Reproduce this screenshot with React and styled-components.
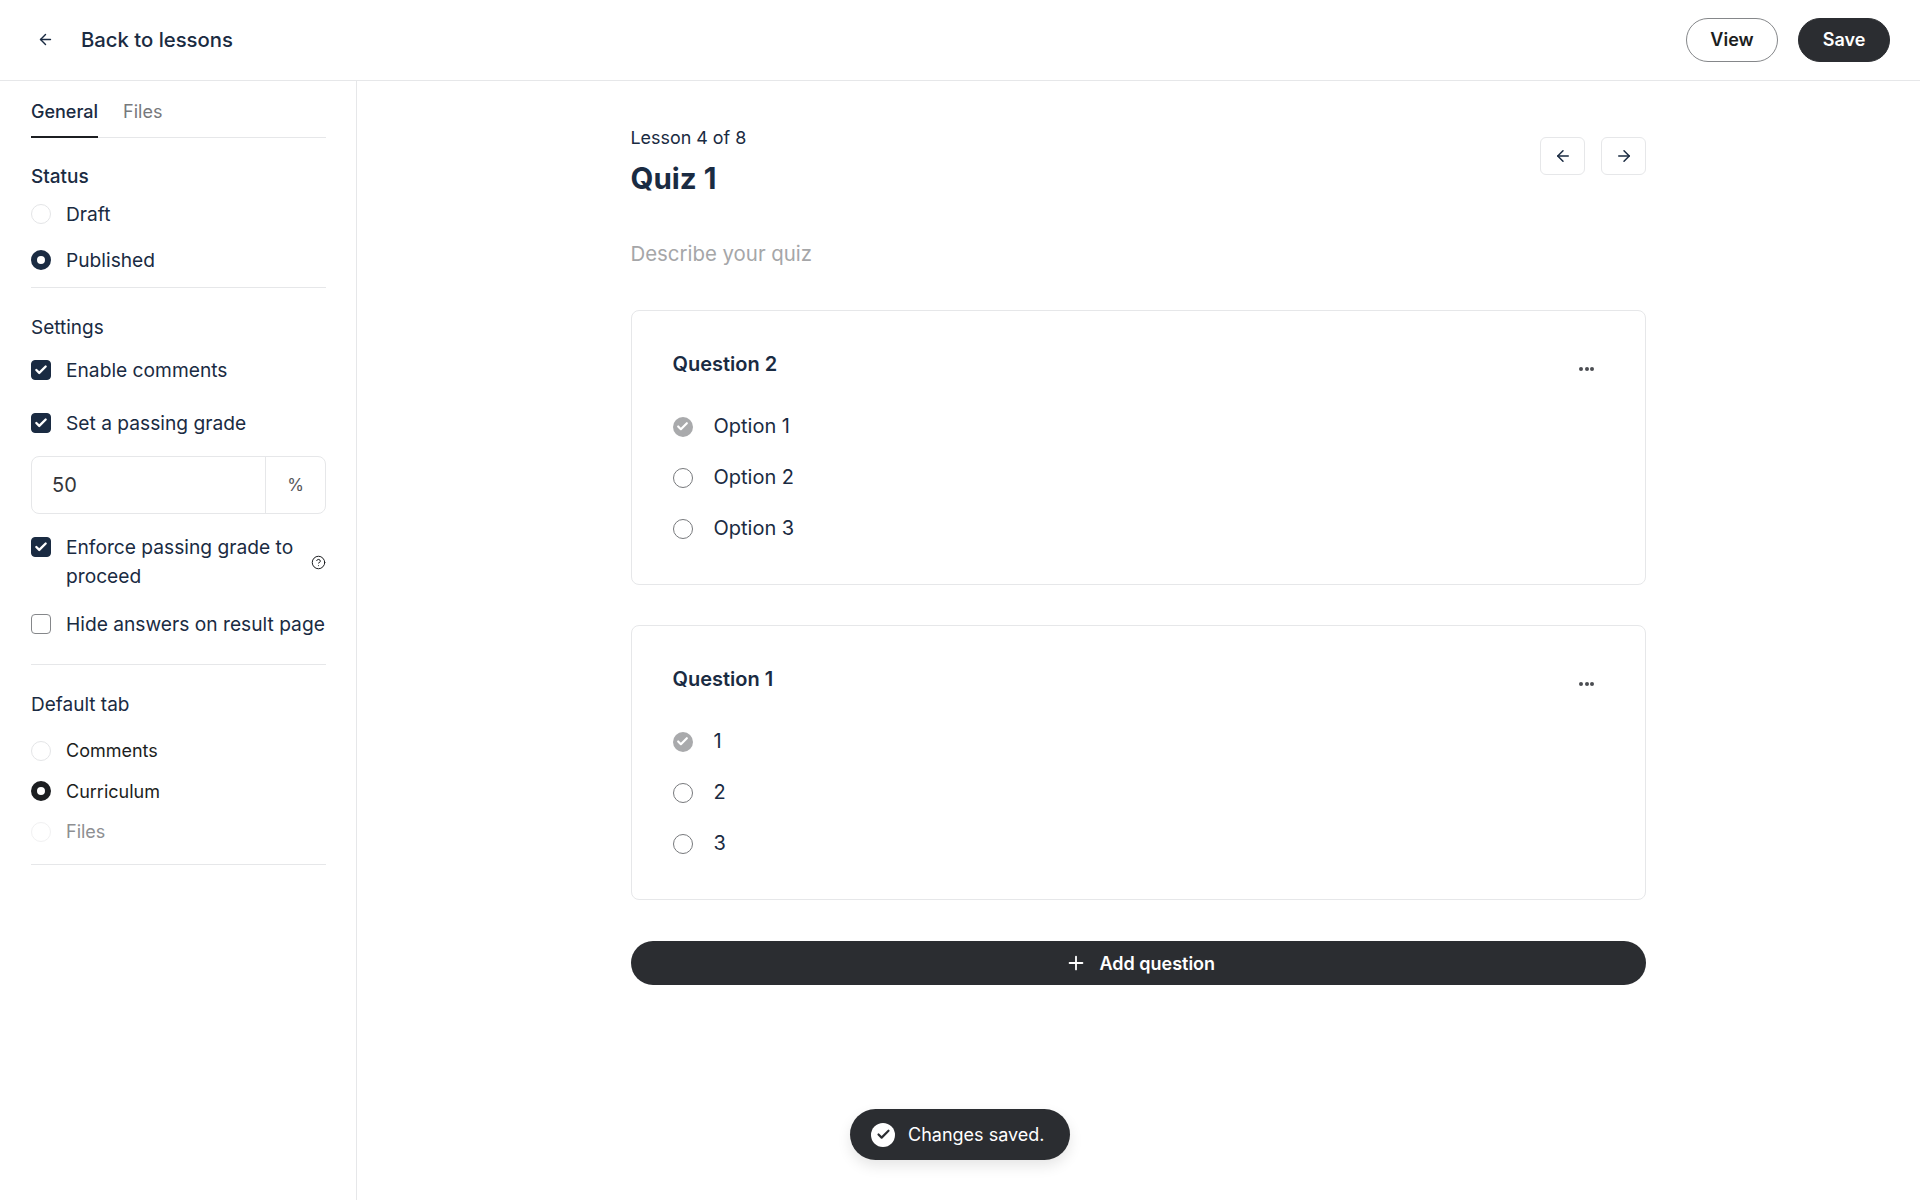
import React from 'react';
import styled, { createGlobalStyle } from 'styled-components';
import { ArrowLeft, ArrowRight, Plus, Check, CircleHelp } from 'lucide-react';

const NAVY = '#1a2b42';
const INK = '#1c1e21';
const DARK = '#2b2d31';
const LINE = '#e6e7e9';

const GlobalStyle = createGlobalStyle`
  html, body {
    margin: 0;
    padding: 0;
    height: 100%;
    background: #fff;
    font-family: Inter, "Liberation Sans", sans-serif;
    color: ${NAVY};
  }
  * { box-sizing: border-box; }
`;

const Page = styled.div`
  width: 1920px;
  height: 1200px;
  display: flex;
  flex-direction: column;
  position: relative;
  overflow: hidden;
`;

const Header = styled.header`
  height: 81px;
  flex: none;
  display: flex;
  align-items: center;
  justify-content: space-between;
  padding: 0 30px 1px 37px;
  border-bottom: 1px solid ${LINE};
`;

const BackLink = styled.div`
  display: flex;
  align-items: center;
  gap: 27px;
  font-size: 20.3px;
  font-weight: 500;
  svg { color: ${NAVY}; }
`;

const HeaderActions = styled.div`
  display: flex;
  gap: 20px;
`;

const PillButton = styled.button`
  height: 44px;
  width: 92px;
  border-radius: 22px;
  border: 1px solid ${(p) => (p.$dark ? DARK : '#85878a')};
  background: ${(p) => (p.$dark ? DARK : '#fff')};
  color: ${(p) => (p.$dark ? '#fff' : INK)};
  font-family: inherit;
  font-size: 18px;
  font-weight: 600;
  padding: 0;
`;

const Body = styled.div`
  flex: 1;
  display: flex;
  min-height: 0;
`;

const Sidebar = styled.aside`
  width: 357px;
  flex: none;
  border-right: 1px solid ${LINE};
  padding: 0 30px 0 31px;
`;

const Tabs = styled.div`
  display: flex;
  gap: 25px;
  height: 57px;
  border-bottom: 1px solid ${LINE};
`;

const Tab = styled.div`
  height: 57px;
  padding-top: 21px;
  font-size: 18px;
  line-height: 20px;
  font-weight: ${(p) => (p.$active ? 500 : 400)};
  color: ${(p) => (p.$active ? NAVY : '#77797c')};
  border-bottom: ${(p) => (p.$active ? `2px solid ${INK}` : 'none')};
`;

const Section = styled.section`
  padding-top: ${(p) => p.$top || 0}px;
  padding-bottom: ${(p) => p.$bottom || 0}px;
  border-bottom: 1px solid ${LINE};
`;

const SectionTitle = styled.div`
  font-size: 19px;
  line-height: 24px;
  font-weight: ${(p) => p.$weight || 400};
  margin-bottom: ${(p) => p.$gap || 0}px;
`;

const Row = styled.div`
  display: flex;
  align-items: ${(p) => (p.$top ? 'flex-start' : 'center')};
  gap: 15px;
  height: ${(p) => (p.$height ? `${p.$height}px` : 'auto')};
  font-size: ${(p) => p.$size || 19.2}px;
  line-height: 29px;
  color: ${(p) => p.$color || NAVY};
  margin-bottom: ${(p) => p.$gap || 0}px;
`;

const RadioDot = styled.span`
  width: 20px;
  height: 20px;
  flex: none;
  border-radius: 50%;
  border: ${(p) => (p.$on ? `6px solid ${p.$color || NAVY}` : `1px solid ${p.$faint ? '#f1f1f2' : '#e4e5e7'}`)};
  background: #fff;
`;

const CheckBox = styled.span`
  width: 20px;
  height: 20px;
  flex: none;
  border-radius: 4px;
  display: flex;
  align-items: center;
  justify-content: center;
  background: ${(p) => (p.$on ? NAVY : '#fff')};
  border: 1px solid ${(p) => (p.$on ? NAVY : '#85878a')};
  color: #fff;
  margin-top: ${(p) => p.$offset || 0}px;
`;

const GradeField = styled.div`
  height: 58px;
  display: flex;
  border: 1px solid ${LINE};
  border-radius: 8px;
  margin: 17px 0 19px;
`;

const GradeValue = styled.div`
  flex: 1;
  padding-left: 20px;
  font-size: 20px;
  line-height: 57px;
  color: #33353a;
`;

const GradeUnit = styled.div`
  width: 60px;
  border-left: 1px solid ${LINE};
  display: flex;
  align-items: center;
  justify-content: center;
  font-size: 17px;
  color: #55575b;
`;

const EnforceLabel = styled.span`
  flex: 1;
`;

const HelpIcon = styled.span`
  display: flex;
  align-self: center;
  color: ${INK};
  margin-left: -2px;
`;

const Main = styled.main`
  flex: 1;
  padding-top: 45px;
`;

const Column = styled.div`
  width: 1015.5px;
  margin-left: 273.5px;
`;

const TitleRow = styled.div`
  display: flex;
  justify-content: space-between;
  align-items: flex-start;
`;

const Eyebrow = styled.div`
  font-size: 17.9px;
  line-height: 24px;
`;

const QuizTitle = styled.h1`
  margin: 8px 0 0;
  font-size: 29.5px;
  line-height: 40px;
  font-weight: 700;
`;

const PagerGroup = styled.div`
  display: flex;
  gap: 16px;
  margin-top: 11px;
`;

const PagerButton = styled.button`
  width: 45px;
  height: 38px;
  border: 1px solid ${LINE};
  border-radius: 6px;
  background: #fff;
  color: ${NAVY};
  display: flex;
  align-items: center;
  justify-content: center;
  padding: 0;
`;

const Describe = styled.div`
  margin-top: 42px;
  font-size: 20.4px;
  line-height: 28px;
  color: #a5a6a8;
`;

const QuestionCard = styled.div`
  height: 275px;
  margin-top: ${(p) => p.$top}px;
  padding: 39px 41px 0;
  border: 1px solid ${LINE};
  border-radius: 8px;
`;

const QuestionHead = styled.div`
  display: flex;
  justify-content: space-between;
  margin-bottom: 22px;
`;

const QuestionTitle = styled.div`
  font-size: 20px;
  line-height: 28px;
  font-weight: 600;
`;

const MoreDots = styled.div`
  display: flex;
  gap: 1.5px;
  padding: 17px 10px 0 0;
  i {
    width: 4px;
    height: 4px;
    border-radius: 50%;
    background: #4b4d52;
  }
`;

const Option = styled.div`
  display: flex;
  align-items: center;
  gap: 21px;
  height: 51px;
  font-size: 20px;
  color: ${NAVY};
`;

const OptionMark = styled.span`
  width: 20px;
  height: 20px;
  flex: none;
  border-radius: 50%;
  display: flex;
  align-items: center;
  justify-content: center;
  color: #fff;
  margin-top: 2px;
  background: ${(p) => (p.$on ? '#a9aaac' : '#fff')};
  border: ${(p) => (p.$on ? 'none' : '1.5px solid #77797c')};
`;

const AddButton = styled.button`
  width: 100%;
  height: 44px;
  margin-top: 41px;
  border: none;
  border-radius: 22px;
  background: ${DARK};
  color: #fff;
  display: flex;
  align-items: center;
  justify-content: center;
  gap: 12px;
  font-family: inherit;
  font-size: 18px;
  font-weight: 600;
  padding: 0 0 0 4px;
`;

const Toast = styled.div`
  position: absolute;
  left: 850px;
  top: 1109px;
  width: 220px;
  height: 51px;
  border-radius: 26px;
  background: ${DARK};
  color: #fff;
  display: flex;
  align-items: center;
  gap: 13px;
  padding-left: 21px;
  font-size: 18px;
  box-shadow: 0 6px 14px rgba(0, 0, 0, 0.1);
`;

const ToastIcon = styled.span`
  width: 24px;
  height: 24px;
  border-radius: 50%;
  background: #fff;
  color: ${DARK};
  display: flex;
  align-items: center;
  justify-content: center;
`;

const questions = [
  { title: 'Question 2', options: ['Option 1', 'Option 2', 'Option 3'], top: 42 },
  { title: 'Question 1', options: ['1', '2', '3'], top: 40 }
];

export default function App() {
  return (
    <Page>
      <GlobalStyle />
      <Header>
        <BackLink>
          <ArrowLeft size={17} strokeWidth={2} />
          Back to lessons
        </BackLink>
        <HeaderActions>
          <PillButton>View</PillButton>
          <PillButton $dark>Save</PillButton>
        </HeaderActions>
      </Header>
      <Body>
        <Sidebar>
          <Tabs>
            <Tab $active>General</Tab>
            <Tab>Files</Tab>
          </Tabs>
          <Section $top={27} $bottom={10}>
            <SectionTitle $weight={500} $gap={8}>Status</SectionTitle>
            <Row $height={34} $gap={12}>
              <RadioDot />
              Draft
            </Row>
            <Row $height={34}>
              <RadioDot $on />
              Published
            </Row>
          </Section>
          <Section $top={28} $bottom={24}>
            <SectionTitle $gap={14}>Settings</SectionTitle>
            <Row $height={32} $gap={21}>
              <CheckBox $on><Check size={14} strokeWidth={4} /></CheckBox>
              Enable comments
            </Row>
            <Row $height={32}>
              <CheckBox $on><Check size={14} strokeWidth={4} /></CheckBox>
              Set a passing grade
            </Row>
            <GradeField>
              <GradeValue>50</GradeValue>
              <GradeUnit>%</GradeUnit>
            </GradeField>
            <Row $top $gap={17}>
              <CheckBox $on $offset={4}><Check size={14} strokeWidth={4} /></CheckBox>
              <EnforceLabel>Enforce passing grade to proceed</EnforceLabel>
              <HelpIcon><CircleHelp size={15} strokeWidth={1.6} /></HelpIcon>
            </Row>
            <Row $height={32}>
              <CheckBox />
              Hide answers on result page
            </Row>
          </Section>
          <Section $top={28} $bottom={12}>
            <SectionTitle $gap={13}>Default tab</SectionTitle>
            <Row $height={41} $size={18} $color={INK}>
              <RadioDot />
              Comments
            </Row>
            <Row $height={40} $size={18} $color={INK}>
              <RadioDot $on $color={INK} />
              Curriculum
            </Row>
            <Row $height={41} $size={18} $color="#8e8f92">
              <RadioDot $faint />
              Files
            </Row>
          </Section>
        </Sidebar>
        <Main>
          <Column>
            <TitleRow>
              <div>
                <Eyebrow>Lesson 4 of 8</Eyebrow>
                <QuizTitle>Quiz 1</QuizTitle>
              </div>
              <PagerGroup>
                <PagerButton><ArrowLeft size={18} strokeWidth={2} /></PagerButton>
                <PagerButton><ArrowRight size={18} strokeWidth={2} /></PagerButton>
              </PagerGroup>
            </TitleRow>
            <Describe>Describe your quiz</Describe>
            {questions.map((q) => (
              <QuestionCard key={q.title} $top={q.top}>
                <QuestionHead>
                  <QuestionTitle>{q.title}</QuestionTitle>
                  <MoreDots><i /><i /><i /></MoreDots>
                </QuestionHead>
                {q.options.map((o, i) => (
                  <Option key={o}>
                    <OptionMark $on={i === 0}>
                      {i === 0 && <Check size={13} strokeWidth={4} />}
                    </OptionMark>
                    {o}
                  </Option>
                ))}
              </QuestionCard>
            ))}
            <AddButton>
              <Plus size={22} strokeWidth={2} />
              Add question
            </AddButton>
          </Column>
        </Main>
      </Body>
      <Toast>
        <ToastIcon><Check size={15} strokeWidth={3.5} /></ToastIcon>
        Changes saved.
      </Toast>
    </Page>
  );
}
